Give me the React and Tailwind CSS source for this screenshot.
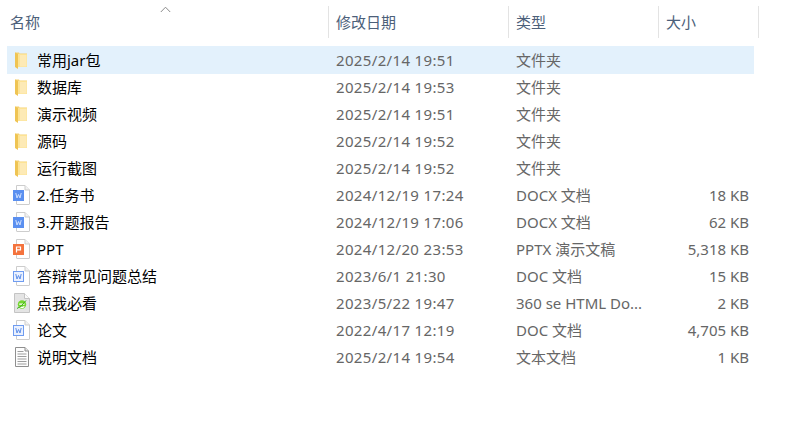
import React from "react";

const Folder = () => (
  <svg width="12" height="17" viewBox="0 0 12 17" className="shrink-0 ml-[2px]">
    <path d="M0 .5 L4 .5 L4.5 1.5 L12 1.5 L12 15 L0 15 Z" fill="#f6d272" />
    <path d="M3 2 L12 2 L12 15 L3 15 Z" fill="#fde394" />
    <path d="M5 3 L11.5 3 L11.5 14.5 L5 14.5 Z" fill="#fdeab6" />
    <path d="M0 .5 L3 2 L3 17 L0 15 Z" fill="#efc453" />
  </svg>
);

const Doc = ({ badge, letter, light }) => (
  <svg width="18" height="20" viewBox="0 0 18 20" className="shrink-0">
    <path d="M3.5 .5 H12 L16.5 5 V19 Q16.5 19.5 16 19.5 H4 Q3.5 19.5 3.5 19 Z" fill="#fff" stroke="#cdcdcd" />
    <path d="M12 .5 V5 H16.5" fill="#f2f2f2" stroke="#cdcdcd" />
    <rect x=".5" y="5.5" width="10" height="10" fill={light ? "#eaf1ff" : badge} stroke={light ? "#6f9cf0" : badge} />
    {letter === "W" ? (
      <path d="M2.8 8 L4 13 L5.5 9.5 L7 13 L8.2 8" fill="none" stroke={light ? "#5f8fe8" : "#cfe0ff"} strokeWidth="1" />
    ) : (
      <path d="M3.5 13.5 V8 H7.5 V10.8 H3.5" fill="none" stroke="#fff" strokeWidth="1.2" />
    )}
  </svg>
);

const Html = () => (
  <svg width="18" height="20" viewBox="0 0 18 20" className="shrink-0">
    <path d="M1.5 .5 H11.5 L16.5 5.5 V19.5 H1.5 Z" fill="#e4e4e4" stroke="#c4c4c4" />
    <path d="M11.5 .5 V5.5 H16.5" fill="#fafafa" stroke="#c4c4c4" />
    <circle cx="9" cy="11.5" r="4.2" fill="#74d62f" />
    <path d="M6.2 11.2 H11.6 M11.4 13.6 Q9 15.6 6.8 13.4" fill="none" stroke="#fff" strokeWidth="1.3" />
    <path d="M4 15.5 Q8 14.5 13 7.5" fill="none" stroke="#3fae1c" strokeWidth="1" />
  </svg>
);

const Txt = () => (
  <svg width="18" height="20" viewBox="0 0 18 20" className="shrink-0">
    <path d="M2.5 .5 H12 L15.5 4 V19.5 H2.5 Z" fill="#fdfdfd" stroke="#8f8f8f" />
    <path d="M12 .5 V4 H15.5" fill="#e6e6e6" stroke="#8f8f8f" />
    <path d="M4.5 4.5 H10.5 M4.5 7 H13.5 M4.5 9.5 H13.5 M4.5 12 H13.5 M4.5 14.5 H13.5 M4.5 17 H13.5" stroke="#9d9d9d" strokeWidth="1" />
  </svg>
);

const word = <Doc badge="#5b90f0" letter="W" />;
const wordLight = <Doc badge="#5b90f0" letter="W" light />;
const ppt = <Doc badge="#f4733d" letter="P" />;

const rows = [
  [<Folder />, "常用jar包", "2025/2/14 19:51", "文件夹", "", true],
  [<Folder />, "数据库", "2025/2/14 19:53", "文件夹", ""],
  [<Folder />, "演示视频", "2025/2/14 19:51", "文件夹", ""],
  [<Folder />, "源码", "2025/2/14 19:52", "文件夹", ""],
  [<Folder />, "运行截图", "2025/2/14 19:52", "文件夹", ""],
  [word, "2.任务书", "2024/12/19 17:24", "DOCX 文档", "18 KB"],
  [word, "3.开题报告", "2024/12/19 17:06", "DOCX 文档", "62 KB"],
  [ppt, "PPT", "2024/12/20 23:53", "PPTX 演示文稿", "5,318 KB"],
  [wordLight, "答辩常见问题总结", "2023/6/1 21:30", "DOC 文档", "15 KB"],
  [<Html />, "点我必看", "2023/5/22 19:47", "360 se HTML Do...", "2 KB"],
  [wordLight, "论文", "2022/4/17 12:19", "DOC 文档", "4,705 KB"],
  [<Txt />, "说明文档", "2025/2/14 19:54", "文本文档", "1 KB"],
];

const font = { fontFamily: '"Noto Sans", "Noto Sans CJK SC", sans-serif' };

export default function App() {
  return (
    <div className="relative w-[799px] h-[423px] bg-white overflow-hidden text-[15px] pt-[6px]" style={font}>
      <svg width="12" height="7" viewBox="0 0 12 7" className="absolute left-[160px] top-[6px]">
        <path d="M.8 6 L5.5 1.2 L10.2 6" fill="none" stroke="#8a8a8a" strokeWidth="1" />
      </svg>
      <div className="flex h-[32px] text-[#4c607a]">
        <div className="w-[329px] pl-[10px] border-r border-[#e3e3e3] flex items-center">名称</div>
        <div className="w-[180px] pl-[7px] border-r border-[#e3e3e3] flex items-center">修改日期</div>
        <div className="w-[150px] pl-[7px] border-r border-[#e3e3e3] flex items-center">类型</div>
        <div className="w-[100px] pl-[7px] border-r border-[#e3e3e3] flex items-center">大小</div>
      </div>
      <div className="mt-[8px] ml-[7px] w-[747px] flex flex-col">
        {rows.map(([icon, name, date, type, size, sel], i) => (
          <div key={i} className={`flex items-center h-[28px] -mb-px ${sel ? "bg-[#e3f1fc]" : ""}`}>
            <div className="w-[322px] flex items-center min-w-0">
              <div className="w-[30px] pl-[6px] flex items-center shrink-0">{icon}</div>
              <span className="text-black whitespace-nowrap">{name}</span>
            </div>
            <div className="w-[180px] pl-[7px] text-[#666666] whitespace-nowrap tracking-[0.35px]">{date}</div>
            <div className="w-[150px] pl-[7px] text-[#666666] whitespace-nowrap">{type}</div>
            <div className="w-[95px] pr-[5px] text-right text-[#666666] whitespace-nowrap">{size}</div>
          </div>
        ))}
      </div>
    </div>
  );
}
